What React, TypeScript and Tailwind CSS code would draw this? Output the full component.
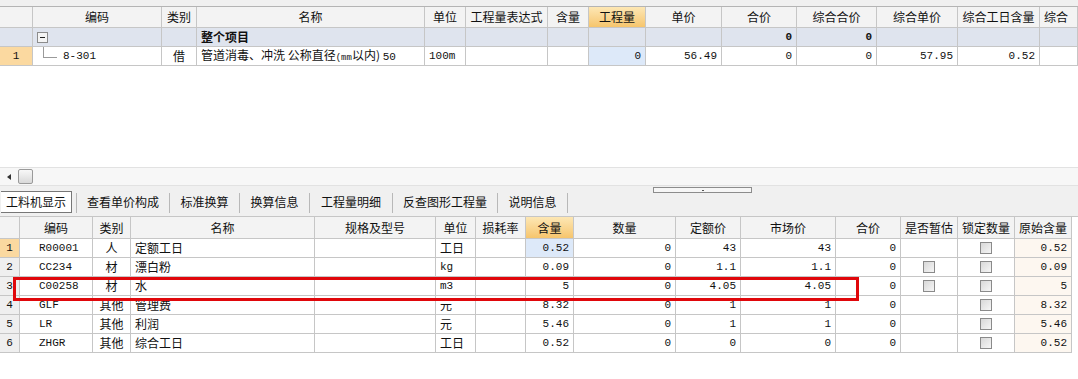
import React from "react";

const CJK = "font-['Noto_Sans_CJK_SC','Noto_Sans',sans-serif]";
const MONO = "font-['Liberation_Mono','Noto_Sans_CJK_SC',monospace]";

type Cell = {
  t?: string;
  w: number;
  align?: "l" | "r" | "c";
  bg?: string;
  mono?: boolean;
  bold?: boolean;
  node?: React.ReactNode;
};

function Row({ cells, h, extra }: { cells: Cell[]; h: string; extra?: string }) {
  return (
    <div className={`flex ${h} ${extra ?? ""}`}>
      {cells.map((c, i) => (
        <div
          key={i}
          style={{ width: c.w }}
          className={`shrink-0 h-full border-r border-b border-[#c6c6c6] flex items-center overflow-hidden whitespace-nowrap px-[4px] ${
            c.align === "r" ? "justify-end" : c.align === "c" ? "justify-center" : "justify-start"
          } ${c.bg ?? ""} ${c.mono ? `${MONO} text-[11px]` : `${CJK} text-[12px]`} ${c.bold ? "font-bold" : ""}`}
        >
          {c.node ?? c.t}
        </div>
      ))}
    </div>
  );
}

const HDR = "bg-[#f3f3f3]";
const ORANGE = "bg-gradient-to-b from-[#fde7b4] to-[#f6c56c]";
const ROWNO_ORANGE = "bg-[#fbd9a0]";
const ROWNO = "bg-[#efefef]";
const BLUE = "bg-[#dde9f9]";
const GROUP = "bg-[#dfe4ee]";
const BEIGE = "bg-[#fdf7f0]";

function Check() {
  return (
    <div className="w-[12px] h-[12px] border border-[#8a8a8a] bg-gradient-to-br from-[#d8d8d8] to-[#f6f6f6]" />
  );
}

const topW = [33, 129, 35, 228, 41, 82, 41, 57, 76, 75, 80, 81, 82, 38];
const topHeaders = ["", "编码", "类别", "名称", "单位", "工程量表达式", "含量", "工程量", "单价", "合价", "综合合价", "综合单价", "综合工日含量", "综合"];

const botW = [20, 73, 38, 184, 121, 40, 50, 48, 102, 65, 95, 65, 57, 57, 57];
const botHeaders = ["", "编码", "类别", "名称", "规格及型号", "单位", "损耗率", "含量", "数量", "定额价", "市场价", "合价", "是否暂估", "锁定数量", "原始含量"];

const botRows = [
  ["1", "R00001", "人", "定额工日", "", "工日", "", "0.52", "0", "43", "43", "0", false, true, "0.52"],
  ["2", "CC234", "材", "漂白粉", "", "kg", "", "0.09", "0", "1.1", "1.1", "0", true, true, "0.09"],
  ["3", "C00258", "材", "水", "", "m3", "", "5", "0", "4.05", "4.05", "0", true, true, "5"],
  ["4", "GLF", "其他", "管理费", "", "元", "", "8.32", "0", "1", "1", "0", false, true, "8.32"],
  ["5", "LR", "其他", "利润", "", "元", "", "5.46", "0", "1", "1", "0", false, true, "5.46"],
  ["6", "ZHGR", "其他", "综合工日", "", "工日", "", "0.52", "0", "0", "0", "0", false, true, "0.52"],
] as const;

const tabs: [string, number][] = [
  ["工料机显示", 77],
  ["查看单价构成", 93],
  ["标准换算", 70],
  ["换算信息", 70],
  ["工程量明细", 83],
  ["反查图形工程量", 105],
  ["说明信息", 70],
];

export default function App() {
  const latin = (s: string) => /^[A-Za-z0-9.]+$/.test(s);
  return (
    <div className={`relative w-[1078px] h-[379px] overflow-hidden bg-white text-[#111] ${CJK}`}>
      {/* top band */}
      <div className="h-[7px] bg-[#f0f0f0] border-b border-[#b4b4b4]" />
      {/* top header */}
      <Row
        h="h-[21px]"
        cells={topHeaders.map((t, i) => ({
          t,
          w: topW[i],
          align: i === 13 ? "l" : "c",
          bg: i === 7 ? ORANGE : HDR,
        }))}
      />
      {/* group row */}
      <Row
        h="h-[19px]"
        cells={topW.map((w, i) => {
          if (i === 1)
            return {
              w,
              bg: GROUP,
              node: (
                <div className="w-[11px] h-[11px] border border-[#8c8c8c] bg-[#f4f4f4] flex items-center justify-center">
                  <div className="w-[5px] h-[1px] bg-[#222]" />
                </div>
              ),
            };
          if (i === 3) return { w, t: "整个项目", bg: GROUP, bold: true };
          if (i === 9 || i === 10) return { w, t: "0", bg: GROUP, align: "r", mono: true, bold: true };
          return { w, bg: GROUP };
        })}
      />
      {/* data row */}
      <Row
        h="h-[19px]"
        cells={[
          { w: 33, t: "1", bg: ROWNO_ORANGE, align: "c", mono: true },
          {
            w: 129,
            node: (
              <div className="flex items-center h-full">
                <div className="relative w-[26px] h-full">
                  <div className="absolute left-[6px] top-0 h-[10px] w-px bg-[#9a9a9a]" />
                  <div className="absolute left-[6px] top-[10px] w-[14px] h-px bg-[#9a9a9a]" />
                </div>
                <span className={`${MONO} text-[11px]`}>8-301</span>
              </div>
            ),
          },
          { w: 35, t: "借", align: "c" },
          {
            w: 228,
            node: (
              <span>
                管道消毒、冲洗 公称直径<span className={`${MONO} text-[9px]`}>(mm</span>以内) <span className={`${MONO} text-[11px]`}>50</span>
              </span>
            ),
          },
          { w: 41, t: "100m", mono: true },
          { w: 82 },
          { w: 41 },
          { w: 57, t: "0", align: "r", mono: true, bg: BLUE },
          { w: 76, t: "56.49", align: "r", mono: true },
          { w: 75, t: "0", align: "r", mono: true },
          { w: 80, t: "0", align: "r", mono: true },
          { w: 81, t: "57.95", align: "r", mono: true },
          { w: 82, t: "0.52", align: "r", mono: true },
          { w: 38 },
        ]}
      />
      {/* empty area */}
      <div className="h-[101px]" />
      {/* horizontal scrollbar */}
      <div className="h-[19px] bg-[#f7f7f7] border-t border-[#e2e2e2] border-b border-[#a9a9a9] flex items-center">
        <div className="w-[18px] flex items-center justify-center">
          <div className="w-0 h-0 border-y-[3px] border-y-transparent border-r-[4px] border-r-[#333]" />
        </div>
        <div className="w-[15px] h-[15px] border border-[#9a9a9a] rounded-[2px] bg-gradient-to-b from-[#f8f8f8] to-[#d9d9d9]" />
      </div>
      {/* tabs bar */}
      <div className="relative h-[30px] bg-[#f0f0f0] flex items-end">
        <div className="absolute left-[653px] top-[1px] w-[99px] h-[6px] border border-[#8c8c8c] bg-[#f6f6f6] flex items-center justify-center">
          <div className="w-[2px] h-px bg-[#555]" />
        </div>
        {tabs.map(([t, w], i) => (
          <div key={t} style={{ width: w }} className="flex items-end h-full pb-[3px] shrink-0">
            <div className="flex-1 flex items-center justify-center">
              {i === 0 ? (
                <div className="h-[22px] w-[71px] mr-[3px] bg-white border border-[#777] border-l-0 flex items-center justify-center text-[12px]">{t}</div>
              ) : (
                <div className="h-[22px] flex items-center text-[12px]">{t}</div>
              )}
            </div>
            <div className="w-px h-[20px] bg-[#b8b8b8]" />
          </div>
        ))}
      </div>
      {/* bottom table */}
      <div className="border-t border-[#c6c6c6]">
        <Row
          h="h-[22px]"
          cells={botHeaders.map((t, i) => ({
            t,
            w: botW[i],
            align: "c",
            bg: i === 7 ? ORANGE : HDR,
          }))}
        />
        {botRows.map((r, ri) => (
          <Row
            key={ri}
            h="h-[19px]"
            cells={botW.map((w, i) => {
              const v = r[i];
              if (i === 0) return { w, t: v as string, align: "c", mono: true, bg: ri === 0 ? ROWNO_ORANGE : ROWNO };
              if (i === 12) return { w, align: "c", node: v ? <Check /> : null };
              if (i === 13) return { w, align: "c", node: v ? <Check /> : null };
              const s = v as string;
              if (i === 1) return { w, t: s, mono: true, node: <span className={`pl-[15px] ${MONO} text-[11px]`}>{s}</span> };
              if (i === 2) return { w, t: s, align: "c" };
              if (i >= 7) return { w, t: s, align: "r", mono: true, bg: i === 7 && ri === 0 ? BLUE : i === 14 ? BEIGE : "" };
              return { w, t: s, mono: latin(s) };
            })}
          />
        ))}
      </div>
      {/* red highlight */}
      <div className="absolute left-[13px] top-[277px] w-[846px] h-[24px] border-[3px] border-[#e0070b]" />
    </div>
  );
}
